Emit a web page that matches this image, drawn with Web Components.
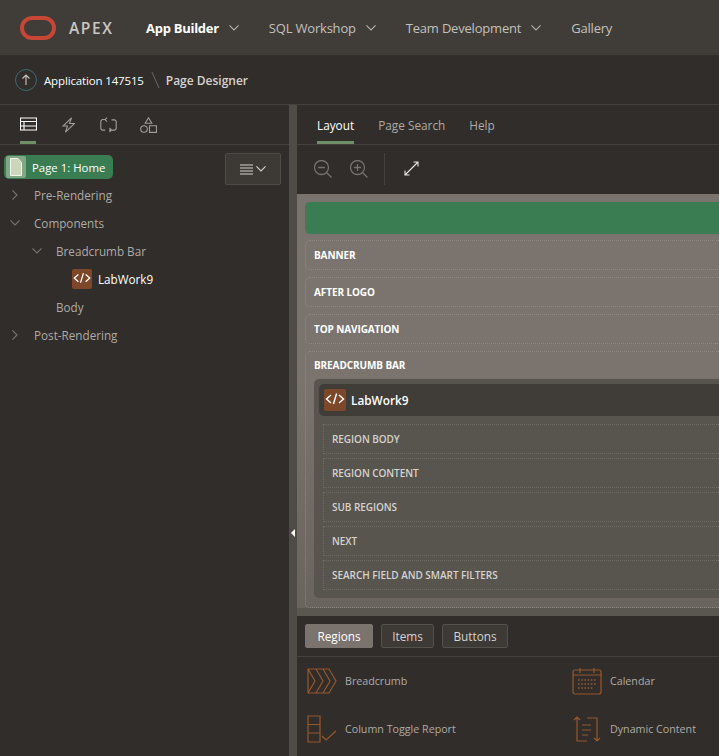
<!DOCTYPE html>
<html lang="en">
<head>
<meta charset="utf-8">
<title>Page Designer</title>
<style>
  html, body { margin: 0; padding: 0; height: 100%; overflow: hidden; background: #312d2a; }
  body { font-family: 'Open Sans', sans-serif; color: #fff; }
</style>
</head>
<body>
<apex-app></apex-app>
<script>
const ICONS = {
  chevron: '<path d="M1 1l5 5 5-5" fill="none" stroke="currentColor" stroke-width="1.2"/>',
  code: '<path d="M7 6l-4.5 4L7 14M15 6l4.5 4L15 14M12.6 4.5l-3.2 10.5" fill="none" stroke="currentColor" stroke-width="1.4"/>'
}

class ApexChevron extends HTMLElement {
  connectedCallback () {
    const dir = this.getAttribute('dir') || 'down'
    this.attachShadow({ mode: 'open' }).innerHTML = /* html */`
      <style>
        :host { display: inline-flex; width: 12px; height: 12px; align-items: center; justify-content: center; color: inherit; }
        svg { transform: rotate(${dir === 'right' ? -90 : 0}deg); }
      </style>
      <svg width="10" height="6" viewBox="0.5 0.5 11 6.6">${ICONS.chevron}</svg>
    `
  }
}

class CodeIcon extends HTMLElement {
  connectedCallback () {
    const size = this.getAttribute('size') || 22
    this.attachShadow({ mode: 'open' }).innerHTML = /* html */`
      <style>
        :host { display: inline-flex; width: ${size}px; height: ${size}px; background: #7d4829; border-radius: 2px; color: #fff; flex: none; }
      </style>
      <svg width="${size}" height="${size}" viewBox="0 0 22 22">${ICONS.code}</svg>
    `
  }
}

class ApexHeader extends HTMLElement {
  connectedCallback () {
    this.attachShadow({ mode: 'open' }).innerHTML = /* html */`
      <style>
        :host { display: flex; align-items: center; height: 55px; background: #403c38; padding-left: 20px; font-size: 13px; letter-spacing: -.2px; color: #c3c1bd; white-space: nowrap; }
        .logo { width: 36px; height: 24px; flex: none; }
        .word { margin-left: 13px; width: 45px; font-size: 15.5px; font-weight: 600; letter-spacing: 1.6px; color: #c9c7c3; margin-right: 32px; }
        .item { display: flex; align-items: center; gap: 9px; margin-right: 29px; }
        .item.on { color: #fff; font-weight: 700; letter-spacing: -.27px; }
        .item apex-chevron { color: #b5b2ad; }
      </style>
      <svg class="logo" viewBox="0 0 36 24"><rect x="2" y="2" width="32" height="20" rx="10" fill="none" stroke="#c74634" stroke-width="4"/></svg>
      <span class="word">APEX</span>
      <span class="item on">App Builder <apex-chevron></apex-chevron></span>
      <span class="item">SQL Workshop <apex-chevron></apex-chevron></span>
      <span class="item">Team Development <apex-chevron></apex-chevron></span>
      <span class="item">Gallery</span>
    `
  }
}

class ApexCrumbs extends HTMLElement {
  connectedCallback () {
    this.attachShadow({ mode: 'open' }).innerHTML = /* html */`
      <style>
        :host { display: flex; align-items: center; height: 50px; box-sizing: border-box; padding: 1px 0 0 15px; border-bottom: 1px solid #45413d; background: #312d2a; font-size: 11.5px; letter-spacing: -.15px; color: #fff; white-space: nowrap; }
        svg.up { flex: none; margin-right: 7px; }
        .sep { margin: 0 6px 0 7px; flex: none; }
        b { font-size: 12px; letter-spacing: 0; font-weight: 600; color: #d5d3cf; }
      </style>
      <svg class="up" width="22" height="22" viewBox="0 0 22 22" fill="none">
        <circle cx="11" cy="11" r="10.5" stroke="#3d6b75"/>
        <path d="M11 16V6M7.5 9.5L11 6l3.5 3.5" stroke="#c9c7c3" stroke-width="1.1"/>
      </svg>
      <span>Application 147515</span>
      <svg class="sep" width="9" height="18" viewBox="0 0 9 18"><path d="M1 1l7 16" stroke="#6b6762"/></svg>
      <b>Page Designer</b>
    `
  }
}

class TreeRow extends HTMLElement {
  connectedCallback () {
    const level = Number(this.getAttribute('level') || 0)
    const toggle = this.getAttribute('toggle')
    this.attachShadow({ mode: 'open' }).innerHTML = /* html */`
      <style>
        :host { display: flex; align-items: center; height: 28px; font-size: 11.7px; color: #aeaba6; padding-left: ${9 + level * 22}px; white-space: nowrap; }
        .tw { width: 12px; height: 12px; margin-right: 13px; flex: none; color: #79756f; display: flex; }
      </style>
      <span class="tw">${toggle ? `<apex-chevron dir="${toggle}"></apex-chevron>` : ''}</span>
      <slot></slot>
    `
  }
}

class ApexTree extends HTMLElement {
  connectedCallback () {
    this.attachShadow({ mode: 'open' }).innerHTML = /* html */`
      <style>
        :host { display: block; position: relative; flex: 1; background: #312d2a; padding-top: 10px; }
        .pill { display: flex; align-items: center; width: 109px; height: 24px; margin-left: 4px; background: #3a7d53; border-radius: 5px; font-size: 11.4px; color: #fff; box-sizing: border-box; padding-left: 2px; white-space: nowrap; margin-bottom: 2px; }
        .pill svg { margin-right: 6px; flex: none; }
        .menu { position: absolute; left: 225px; top: 8px; width: 56px; height: 32px; box-sizing: border-box; border: 1px solid #4f4b46; background: #3d3935; border-radius: 2px; display: flex; align-items: center; justify-content: center; gap: 2px; color: #d5d3cf; }
        .leaf { display: flex; align-items: center; gap: 6px; color: #fff; margin-left: -6px; }
      </style>
      <div class="pill">
        <svg width="20" height="22" viewBox="0 0 20 22">
          <rect width="20" height="22" rx="2" fill="#81a787"/>
          <path d="M4.5 2.5h7.5l3.5 4v13h-11z" fill="#cbd7bb" stroke="#f2f4ea"/>
        </svg>
        Page 1: Home
      </div>
      <div class="menu">
        <svg width="13" height="11" viewBox="0 0 13 11"><path d="M0 1h13M0 4h13M0 7h13M0 10h13" stroke="currentColor" stroke-width="1.1"/></svg>
        <apex-chevron></apex-chevron>
      </div>
      <tree-row toggle="right">Pre-Rendering</tree-row>
      <tree-row toggle="down">Components</tree-row>
      <tree-row level="1" toggle="down">Breadcrumb Bar</tree-row>
      <tree-row level="2"><span class="leaf"><code-icon size="20"></code-icon>LabWork9</span></tree-row>
      <tree-row level="1">Body</tree-row>
      <tree-row toggle="right">Post-Rendering</tree-row>
    `
  }
}

class LeftTabs extends HTMLElement {
  connectedCallback () {
    this.attachShadow({ mode: 'open' }).innerHTML = /* html */`
      <style>
        :host { display: flex; height: 40px; box-sizing: border-box; border-bottom: 1px solid #45413d; padding-left: 20px; gap: 25px; }
        span { position: relative; height: 39px; display: flex; padding-top: 12px; box-sizing: border-box; color: #a09d98; }
        span.on { color: #fff; }
        span.on::after { content: ''; position: absolute; left: 0; right: 1px; bottom: 0; height: 3px; background: #6f8f67; }
        span:last-child { margin-left: -2px; }
        svg { fill: none; stroke: currentColor; stroke-width: 1.1; }
      </style>
      <span class="on"><svg width="17" height="14" viewBox="0 0 17 14"><path d="M.5 1h16v12H.5zM.5 4.5h16M.5 9h16M4 4.5V13"/></svg></span>
      <span><svg width="13" height="16" viewBox="0 0 13 16"><path d="M9.5 .8L1 9h4.5L3.5 15.2l9-8.7H7.5z"/></svg></span>
      <span><svg width="17" height="16" viewBox="0 0 17 16"><path d="M5.5 2.5H2.2L.8 3.9v7.8l1.4 1.4h3M11.5 2.9h3.3l1.4 1.4v7.4l-1.4 1.4H9M7 .6L5 2.6l2 2M9.5 11l2 2.1-2 2"/></svg></span>
      <span><svg width="17" height="16" viewBox="0 0 17 16"><path d="M8.5 .8l3.3 5.5H5.2z"/><circle cx="4" cy="12" r="3.3"/><path d="M9.5 8.8h7v6.6h-7z"/></svg></span>
    `
  }
}

class DesignTabs extends HTMLElement {
  connectedCallback () {
    this.attachShadow({ mode: 'open' }).innerHTML = /* html */`
      <style>
        :host { display: flex; height: 40px; box-sizing: border-box; border-bottom: 1px solid #45413d; padding-left: 20px; gap: 24px; font-size: 11.8px; color: #aeaba6; }
        span { position: relative; height: 39px; line-height: 41px; white-space: nowrap; }
        span.on { color: #fff; }
        span.on::after { content: ''; position: absolute; left: 0; right: 0; bottom: 0; height: 3px; background: #6f8f67; }
      </style>
      <span class="on">Layout</span>
      <span>Page Search</span>
      <span>Help</span>
    `
  }
}

class DesignToolbar extends HTMLElement {
  connectedCallback () {
    this.attachShadow({ mode: 'open' }).innerHTML = /* html */`
      <style>
        :host { display: flex; align-items: center; height: 49px; box-sizing: border-box; padding: 0 0 2px 17px; color: #76726c; }
        svg { fill: none; stroke: currentColor; flex: none; }
        .in { margin-left: 18px; }
        .bar { width: 1px; height: 32px; background: #45413d; margin: 0 19px 0 16px; }
        .ex { color: #e6e4e0; stroke-width: 1.1; }
      </style>
      <svg width="18" height="18" viewBox="0 0 18 18" stroke-width="1.3"><circle cx="7.5" cy="7.5" r="7"/><path d="M4 7.5h7M12.5 12.5l5 5"/></svg>
      <svg class="in" width="18" height="18" viewBox="0 0 18 18" stroke-width="1.3"><circle cx="7.5" cy="7.5" r="7"/><path d="M4 7.5h7M7.5 4v7M12.5 12.5l5 5"/></svg>
      <span class="bar"></span>
      <svg class="ex" width="15" height="15" viewBox="0 0 15 15"><path d="M1 14L14 1M9.5 1H14v4.5M1 9.5V14h4.5"/></svg>
    `
  }
}

class LayoutRegion extends HTMLElement {
  connectedCallback () {
    this.attachShadow({ mode: 'open' }).innerHTML = /* html */`
      <style>
        :host { display: block; box-sizing: border-box; border: 1px dotted #8f8882; border-right: 0; border-radius: 5px 0 0 5px; font-size: 10px; letter-spacing: -.1px; font-weight: 700; color: #fff; padding: 0 0 0 8px; min-height: 30px; line-height: 28px; white-space: nowrap; }
      </style>
      <slot></slot>
    `
  }
}

class SubRegion extends HTMLElement {
  connectedCallback () {
    this.attachShadow({ mode: 'open' }).innerHTML = /* html */`
      <style>
        :host { display: block; box-sizing: border-box; height: 30px; border: 1px dotted #6e6a64; border-right: 0; font-size: 10px; letter-spacing: -.05px; font-weight: 600; line-height: 28px; color: #d5d3cf; padding-left: 8px; white-space: nowrap; }
      </style>
      <slot></slot>
    `
  }
}

class LayoutCanvas extends HTMLElement {
  connectedCallback () {
    this.attachShadow({ mode: 'open' }).innerHTML = /* html */`
      <style>
        :host { display: block; height: 414px; box-sizing: border-box; background: linear-gradient(#7b736d 0, #7b736d 45%, #69645d 100%); padding: 8px 0 0 8px; overflow: hidden; }
        .green { height: 32px; background: #3a7d53; border-radius: 5px 0 0 5px; margin-bottom: 6px; }
        .stack { display: flex; flex-direction: column; gap: 7px; }
        .crumb { height: 257px; flex: none; line-height: 26px; }
        .dark { background: #58544e; border-radius: 5px 0 0 5px; margin-top: 1px; padding: 5px 0 0 5px; height: 219px; box-sizing: border-box; margin-left: 0; font-weight: 400; letter-spacing: 0; }
        .title { display: flex; align-items: center; gap: 5px; height: 32px; padding-left: 5px; background: #403c38; border-radius: 5px 0 0 5px; font-size: 11.8px; font-weight: 600; color: #fff; margin-bottom: 8px; }
        .subs { display: flex; flex-direction: column; gap: 4px; margin-left: 4px; }
      </style>
      <div class="green"></div>
      <div class="stack">
        <layout-region>BANNER</layout-region>
        <layout-region>AFTER LOGO</layout-region>
        <layout-region>TOP NAVIGATION</layout-region>
        <layout-region class="crumb">BREADCRUMB BAR
          <div class="dark">
            <div class="title"><code-icon></code-icon>LabWork9</div>
            <div class="subs">
              <sub-region>REGION BODY</sub-region>
              <sub-region>REGION CONTENT</sub-region>
              <sub-region>SUB REGIONS</sub-region>
              <sub-region>NEXT</sub-region>
              <sub-region>SEARCH FIELD AND SMART FILTERS</sub-region>
            </div>
          </div>
        </layout-region>
      </div>
    `
  }
}

class GalleryItem extends HTMLElement {
  connectedCallback () {
    this.attachShadow({ mode: 'open' }).innerHTML = /* html */`
      <style>
        :host { display: flex; align-items: center; height: 48px; font-size: 10.7px; color: #aeaba6; white-space: nowrap; }
      </style>
      <slot name="icon"></slot>
      <slot></slot>
    `
  }
}

class ApexGallery extends HTMLElement {
  connectedCallback () {
    this.attachShadow({ mode: 'open' }).innerHTML = /* html */`
      <style>
        :host { display: block; flex: 1; background: #312d2a; }
        .tabs { display: flex; gap: 8px; height: 41px; box-sizing: border-box; padding: 8px 0 0 8px; border-bottom: 1px solid #45413d; font-size: 11.8px; color: #d5d3cf; }
        .tabs span { height: 24px; line-height: 22px; box-sizing: border-box; border: 1px solid #55514c; background: #3d3935; border-radius: 2px; text-align: center; }
        .tabs span.on { background: #7b736d; border-color: #7b736d; color: #fff; }
        .grid { display: grid; grid-template-columns: 265px 265px; padding: 0 0 0 10px; }
        svg { width: 30px; height: 28px; margin-right: 8px; flex: none; fill: none; stroke: #94592f; stroke-width: 1.2; }
      </style>
      <div class="tabs"><span class="on" style="width:68px">Regions</span><span style="width:53px">Items</span><span style="width:66px">Buttons</span></div>
      <div class="grid">
        <gallery-item><svg slot="icon" viewBox="0 0 30 28"><path d="M1 2h21l7 12-7 12H1zM1 2l7 12-7 12M9 2l7 12-7 12M16 2l7 12-7 12"/></svg>Breadcrumb</gallery-item>
        <gallery-item><svg slot="icon" viewBox="0 0 30 28"><rect x="1" y="3" width="28" height="24" rx="2"/><path d="M1 8h28M8 1v5M22 1v5"/><path d="M6 13h18M6 17h18M6 21h15" stroke-dasharray="1.6 1.6" stroke-width="1.6"/></svg>Calendar</gallery-item>
        <gallery-item><svg slot="icon" viewBox="0 0 30 28"><path d="M1 1h12v26H1zM1 9.5h12M1 18h12M15 21l4 4 10-9"/></svg>Column Toggle Report</gallery-item>
        <gallery-item><svg slot="icon" viewBox="0 0 30 28"><path d="M2 5l3-3 3 3M5 2v24h10M15 3h10v22M22 23l3 3 3-3M10 10h9M10 15h9M10 20h6"/></svg>Dynamic Content</gallery-item>
      </div>
    `
  }
}

class ApexApp extends HTMLElement {
  connectedCallback () {
    this.attachShadow({ mode: 'open' }).innerHTML = /* html */`
      <style>
        :host { display: flex; flex-direction: column; height: 756px; width: 719px; overflow: hidden; }
        .main { display: flex; flex: 1; min-height: 0; }
        .left { width: 289px; flex: none; display: flex; flex-direction: column; }
        .split { width: 8px; flex: none; background: #4f4b45; position: relative; }
        .split::after { content: ''; position: absolute; left: 2px; top: 424px; border: 4px solid transparent; border-left: 0; border-right-color: #fff; }
        .right { flex: 1; min-width: 0; display: flex; flex-direction: column; }
        .hsplit { height: 8px; flex: none; background: #5a5650; }
      </style>
      <apex-header></apex-header>
      <apex-crumbs></apex-crumbs>
      <div class="main">
        <div class="left"><left-tabs></left-tabs><apex-tree></apex-tree></div>
        <div class="split"></div>
        <div class="right">
          <design-tabs></design-tabs>
          <design-toolbar></design-toolbar>
          <layout-canvas></layout-canvas>
          <div class="hsplit"></div>
          <apex-gallery></apex-gallery>
        </div>
      </div>
    `
  }
}

customElements.define('apex-chevron', ApexChevron)
customElements.define('code-icon', CodeIcon)
customElements.define('apex-header', ApexHeader)
customElements.define('apex-crumbs', ApexCrumbs)
customElements.define('tree-row', TreeRow)
customElements.define('apex-tree', ApexTree)
customElements.define('left-tabs', LeftTabs)
customElements.define('design-tabs', DesignTabs)
customElements.define('design-toolbar', DesignToolbar)
customElements.define('layout-region', LayoutRegion)
customElements.define('sub-region', SubRegion)
customElements.define('layout-canvas', LayoutCanvas)
customElements.define('gallery-item', GalleryItem)
customElements.define('apex-gallery', ApexGallery)
customElements.define('apex-app', ApexApp)
</script>
</body>
</html>
